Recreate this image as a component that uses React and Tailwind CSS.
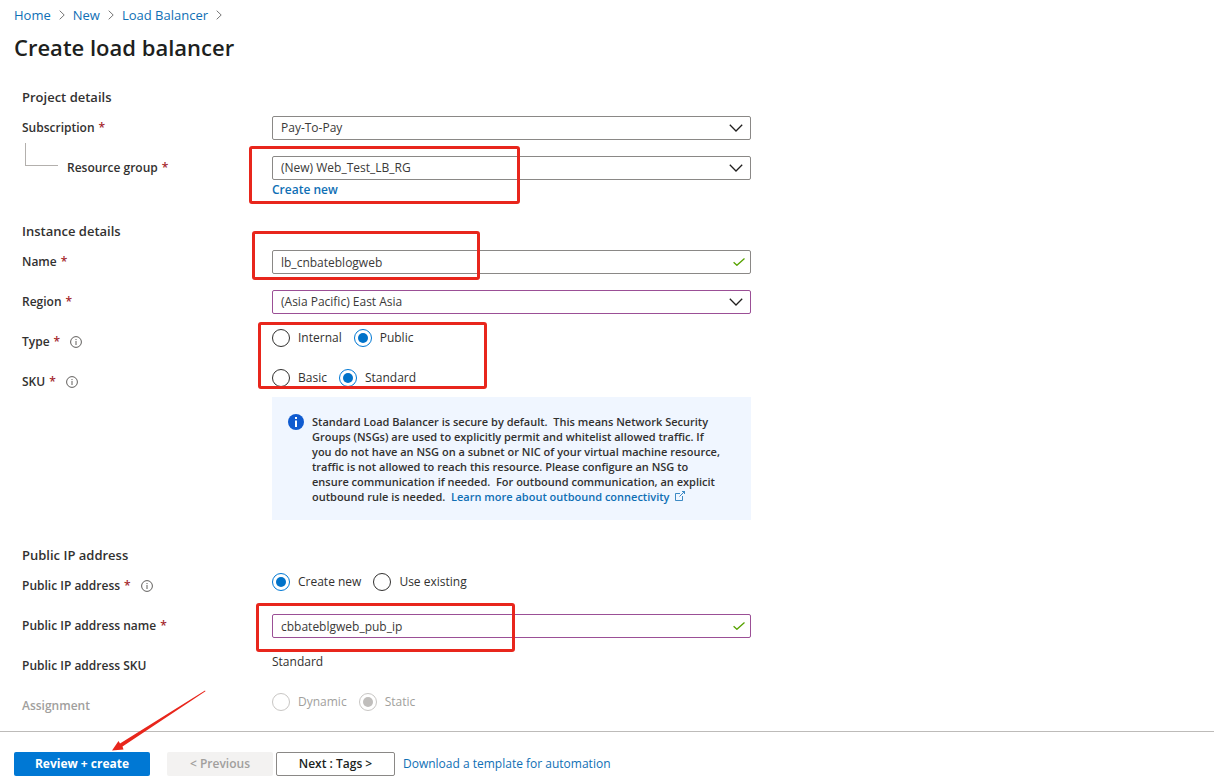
import { useState } from 'react';

const LINK = 'text-[#0f6fb5] hover:underline';

function Crumb({ children }) {
  return (
    <li className="flex items-center gap-2">
      <a href="#" className={LINK}>{children}</a>
      <svg className="h-2.5 w-1.5 text-[#767676]" viewBox="0 0 6 10" fill="none" stroke="currentColor" aria-hidden="true">
        <path d="M0.7 0.7 5.2 5 0.7 9.3" />
      </svg>
    </li>
  );
}

function InfoIcon() {
  return (
    <svg className="ml-2.5 h-3 w-3 shrink-0 text-[#605e5c]" viewBox="0 0 12 12" fill="none" stroke="currentColor" aria-hidden="true">
      <circle cx="6" cy="6" r="5.4" />
      <path d="M6 5v4M6 3v1.1" />
    </svg>
  );
}

function LabelText({ children, required, info }) {
  return (
    <span className="flex items-center">
      {children}
      {required && <span className="ml-1 text-[#a4262c]">*</span>}
      {info && <InfoIcon />}
    </span>
  );
}

function Row({ label, htmlFor, id, required, info, nested, muted, children }) {
  const text = <LabelText required={required} info={info}>{label}</LabelText>;
  return (
    <div className="grid grid-cols-[250px_minmax(0,1fr)] items-start">
      <div className={`relative flex h-6 items-center font-semibold ${nested ? 'pl-[45px]' : ''} ${muted ? 'text-[#a19f9d]' : ''}`}>
        {nested && <span className="absolute bottom-3.5 left-[3px] h-[23px] w-[33px] border-b border-l border-[#b3b0ad]" />}
        {htmlFor ? <label htmlFor={htmlFor}>{text}</label> : <span id={id}>{text}</span>}
      </div>
      <div className="relative">{children}</div>
    </div>
  );
}

const FIELD = 'block h-6 w-full appearance-none rounded-[2px] border bg-white px-2 text-xs leading-5 text-[#3b3a39] outline-none';

function Select({ id, value, edited }) {
  return (
    <div className="relative">
      <select id={id} defaultValue={value} className={`${FIELD} ${edited ? 'border-[#9b4f96]' : 'border-[#8a8886]'}`}>
        <option>{value}</option>
      </select>
      <svg className="pointer-events-none absolute top-2 right-2 h-2 w-3.5 text-[#201f1e]" viewBox="0 0 14 8" fill="none" stroke="currentColor" strokeWidth="1.3" aria-hidden="true">
        <path d="M0.8 0.8 7 7 13.2 0.8" />
      </svg>
    </div>
  );
}

function TextBox({ id, value, edited }) {
  return (
    <div className="relative">
      <input id={id} type="text" defaultValue={value} className={`${FIELD} ${edited ? 'border-[#9b4f96]' : 'border-[#8a8886]'}`} />
      <svg className="pointer-events-none absolute top-2 right-1.5 h-2 w-3 text-[#57a300]" viewBox="0 0 12 8" fill="none" stroke="currentColor" strokeWidth="1.3" aria-hidden="true">
        <path d="M0.6 4.2 3.9 7.3 11.5 0.5" />
      </svg>
    </div>
  );
}

function Radios({ name, labelledBy, options, initial, disabled }) {
  const [selected, setSelected] = useState(initial);
  return (
    <div role="radiogroup" aria-labelledby={labelledBy} className="flex h-4 items-center gap-3">
      {options.map((option) => (
        <label key={option} className={`flex items-center gap-2 ${disabled ? 'text-[#a19f9d]' : ''}`}>
          <input
            type="radio"
            name={name}
            checked={selected === option}
            onChange={() => setSelected(option)}
            disabled={disabled}
            className="h-[18px] w-[18px] appearance-none rounded-full border border-[#323130] bg-clip-content p-[3px] checked:border-[#0078d4] checked:bg-[#0072c9] disabled:border-[#c8c6c4] disabled:checked:bg-[#c0bebc]"
          />
          {option}
        </label>
      ))}
    </div>
  );
}

function Highlight({ className }) {
  return <span className={`pointer-events-none absolute z-10 rounded-[3px] border-3 border-[#e8261c] ${className}`} />;
}

function Section({ title, className, children }) {
  return (
    <section className={className}>
      <h2 className="mb-[9px] text-[13px] font-semibold">{title}</h2>
      <div className="flex flex-col gap-4">{children}</div>
    </section>
  );
}

export default function App() {
  return (
    <div className="flex min-h-screen flex-col bg-white font-['Open_Sans','Noto_Sans',sans-serif] text-xs leading-5 text-[#323130]">
      <header className="px-3.5 pt-[5px]">
        <nav aria-label="Breadcrumb">
          <ol className="flex gap-2 text-[13px] leading-5">
            <Crumb>Home</Crumb>
            <Crumb>New</Crumb>
            <Crumb>Load Balancer</Crumb>
          </ol>
        </nav>
        <h1 className="mt-1.5 text-[22px] leading-8 font-semibold text-[#201f1e]">Create load balancer</h1>
      </header>

      <main className="w-full max-w-[773px] flex-1 px-[22px] pt-6">
        <Section title="Project details">
          <Row label="Subscription" htmlFor="subscription" required>
            <Select id="subscription" value="Pay-To-Pay" />
          </Row>
          <Row label="Resource group" htmlFor="resource-group" required nested>
            <Select id="resource-group" value="(New) Web_Test_LB_RG" />
            <a href="#" className={`block w-fit font-semibold ${LINK}`}>Create new</a>
            <Highlight className="-top-[10px] -left-[23px] h-[58px] w-[271px]" />
          </Row>
        </Section>

        <Section title="Instance details" className="mt-[21px]">
          <Row label="Name" htmlFor="name" required>
            <TextBox id="name" value="lb_cnbateblogweb" />
            <Highlight className="-top-[19px] -left-[20px] h-[49px] w-[228px]" />
          </Row>
          <Row label="Region" htmlFor="region" required>
            <Select id="region" value="(Asia Pacific) East Asia" edited />
          </Row>
          <Row label="Type" id="type-label" required info>
            <Radios name="type" labelledBy="type-label" options={['Internal', 'Public']} initial="Public" />
            <Highlight className="-top-[8px] -left-[14px] h-[67px] w-[229px]" />
          </Row>
          <Row label="SKU" id="sku-label" required info>
            <Radios name="sku" labelledBy="sku-label" options={['Basic', 'Standard']} initial="Standard" />
            <div className="mt-[11px] flex gap-2 bg-[#f0f6ff] pt-[17px] pr-3 pb-4 pl-4 text-[11px] leading-[15px] font-semibold">
              <svg className="h-4 w-4 shrink-0" viewBox="0 0 16 16" aria-hidden="true">
                <circle cx="8" cy="8" r="8" fill="#0f5bd0" />
                <path d="M7 6.5h2V13H7zM7 3h2v2H7z" fill="#fff" />
              </svg>
              <p>
                Standard Load Balancer is secure by default.&nbsp; This means Network Security
                <br />
                Groups (NSGs) are used to explicitly permit and whitelist allowed traffic. If
                <br />
                you do not have an NSG on a subnet or NIC of your virtual machine resource,
                <br />
                traffic is not allowed to reach this resource. Please configure an NSG to
                <br />
                ensure communication if needed.&nbsp; For outbound communication, an explicit
                <br />
                outbound rule is needed.&nbsp;{' '}
                <a href="#" className={LINK}>
                  Learn more about outbound connectivity
                  <svg className="ml-1.5 inline h-2.5 w-2.5 align-baseline" viewBox="0 0 10 10" fill="none" stroke="currentColor" strokeWidth="0.8" aria-hidden="true">
                    <path d="M5 2.5H0.5v7h7V5M7 0.5h2.5V3M9.5 0.5 4.5 5.5" />
                  </svg>
                </a>
              </p>
            </div>
          </Row>
        </Section>

        <Section title="Public IP address" className="mt-[25px]">
          <Row label="Public IP address" id="ip-label" required info>
            <Radios name="ip" labelledBy="ip-label" options={['Create new', 'Use existing']} initial="Create new" />
          </Row>
          <Row label="Public IP address name" htmlFor="ip-name" required>
            <TextBox id="ip-name" value="cbbateblgweb_pub_ip" edited />
            <Highlight className="-top-[11px] -left-[16px] h-[49px] w-[259px]" />
          </Row>
          <Row label="Public IP address SKU">
            <p className="leading-4">Standard</p>
          </Row>
          <Row label="Assignment" id="assignment-label" muted>
            <Radios name="assignment" labelledBy="assignment-label" options={['Dynamic', 'Static']} initial="Static" disabled />
          </Row>
        </Section>
      </main>

      <footer className="flex items-center border-t border-[#bdbbb9] px-3.5 pt-5 pb-[7px]">
        <div className="relative">
          <button type="button" className="h-6 w-[136px] rounded-[2px] bg-[#0078d4] font-bold text-white">Review + create</button>
          <svg className="pointer-events-none absolute bottom-full left-[97px] h-[62px] w-24" viewBox="0 0 96 62" aria-hidden="true">
            <path d="M94 0.5 94.5 1.2 11.5 56.5 12.5 59.5 1 60.5 7.5 51 9 53.5Z" fill="#e8261c" />
          </svg>
        </div>
        <button type="button" disabled className="ml-[17px] h-6 w-[106px] rounded-[2px] bg-[#f3f2f1] font-semibold text-[#a19f9d]">&lt; Previous</button>
        <button type="button" className="ml-[3px] h-6 w-[119px] rounded-[2px] border border-[#8a8886] font-semibold text-[#201f1e]">Next : Tags &gt;</button>
        <a href="#" className={`ml-2 ${LINK}`}>Download a template for automation</a>
      </footer>
    </div>
  );
}
